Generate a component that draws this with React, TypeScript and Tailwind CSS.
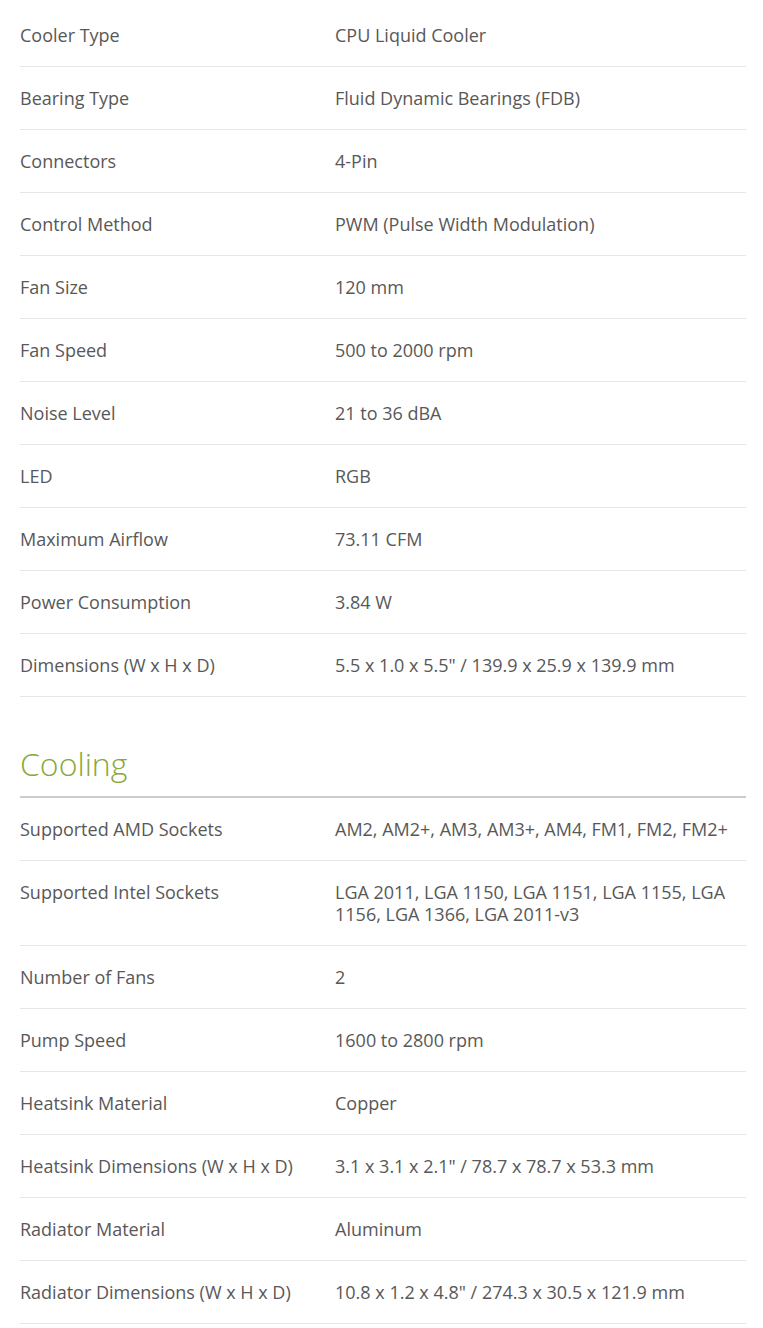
import React from 'react';

const general: [string, string][] = [
  ['Cooler Type', 'CPU Liquid Cooler'],
  ['Bearing Type', 'Fluid Dynamic Bearings (FDB)'],
  ['Connectors', '4-Pin'],
  ['Control Method', 'PWM (Pulse Width Modulation)'],
  ['Fan Size', '120 mm'],
  ['Fan Speed', '500 to 2000 rpm'],
  ['Noise Level', '21 to 36 dBA'],
  ['LED', 'RGB'],
  ['Maximum Airflow', '73.11 CFM'],
  ['Power Consumption', '3.84 W'],
  ['Dimensions (W x H x D)', '5.5 x 1.0 x 5.5" / 139.9 x 25.9 x 139.9 mm'],
];

const cooling: [string, string][] = [
  ['Supported AMD Sockets', 'AM2, AM2+, AM3, AM3+, AM4, FM1, FM2, FM2+'],
  ['Supported Intel Sockets', 'LGA 2011, LGA 1150, LGA 1151, LGA 1155, LGA 1156, LGA 1366, LGA 2011-v3'],
  ['Number of Fans', '2'],
  ['Pump Speed', '1600 to 2800 rpm'],
  ['Heatsink Material', 'Copper'],
  ['Heatsink Dimensions (W x H x D)', '3.1 x 3.1 x 2.1" / 78.7 x 78.7 x 53.3 mm'],
  ['Radiator Material', 'Aluminum'],
  ['Radiator Dimensions (W x H x D)', '10.8 x 1.2 x 4.8" / 274.3 x 30.5 x 121.9 mm'],
];

function SpecRow({ label, value }: { label: string; value: string }) {
  return (
    <div className="grid grid-cols-[315px_1fr] border-b border-[#e6e6e6] py-[20px] text-[18px] leading-[22px] text-[#585858]">
      <div>{label}</div>
      <div className="pr-[4px]">{value}</div>
    </div>
  );
}

export default function App() {
  return (
    <div className="min-h-[1328px] bg-white pl-[20px] pr-[17px] pt-[4px] font-['Open_Sans',sans-serif]">
      <div>
        {general.map(([l, v]) => (
          <SpecRow key={l} label={l} value={v} />
        ))}
      </div>

      <h2 className="mt-[44px] border-b-2 border-[#cccccc] pb-[9px] text-[32px] font-light leading-[46px] text-[#88a83a]">
        Cooling
      </h2>
      <div>
        {cooling.map(([l, v]) => (
          <SpecRow key={l} label={l} value={v} />
        ))}
      </div>
    </div>
  );
}
